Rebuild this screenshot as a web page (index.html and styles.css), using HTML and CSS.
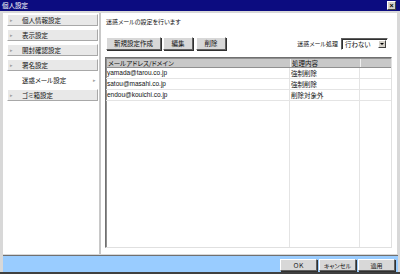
FILE: index.html
```html
<!DOCTYPE html>
<html lang="ja">
<head>
    <meta charset="UTF-8">
    <title>個人設定</title>
    <link rel="stylesheet" href="styles.css">
</head>
<body>
    <div class="window">
        <div class="titlebar">
            <span>個人設定</span>
            <span class="close">×</span>
        </div>

        <div class="main">
            <div class="sidebar">
                <div class="menu-item"><span class="mark">▸</span>個人情報設定</div>
                <div class="menu-item"><span class="mark">▸</span>表示設定</div>
                <div class="menu-item"><span class="mark">▸</span>開封確認設定</div>
                <div class="menu-item"><span class="mark">▸</span>署名設定</div>
                <div class="menu-item active"><span class="mark"></span>迷惑メール設定<span class="arrow">▸</span></div>
                <div class="menu-item"><span class="mark">▸</span>ゴミ箱設定</div>
            </div>

            <div class="content">
                <p class="lead">迷惑メールの設定を行います</p>

                <div class="toolbar">
                    <button class="btn wide">新規設定作成</button>
                    <button class="btn">編集</button>
                    <button class="btn">削除</button>
                    <div class="option">
                        <span>迷惑メール処理</span>
                        <div class="select">
                            <span>行わない</span>
                            <span class="drop"><i class="tri"></i></span>
                        </div>
                    </div>
                </div>

                <div class="list">
                    <div class="row head">
                        <span class="col-addr">メールアドレス/ドメイン</span>
                        <span class="col-act">処理内容</span>
                        <span class="col-end"></span>
                    </div>
                    <div class="row">
                        <span class="col-addr">yamada@tarou.co.jp</span>
                        <span class="col-act">強制削除</span>
                        <span class="col-end"></span>
                    </div>
                    <div class="row">
                        <span class="col-addr">satou@masahi.co.jp</span>
                        <span class="col-act">強制削除</span>
                        <span class="col-end"></span>
                    </div>
                    <div class="row">
                        <span class="col-addr">endou@kouichi.co.jp</span>
                        <span class="col-act">削除対象外</span>
                        <span class="col-end"></span>
                    </div>
                    <div class="row filler">
                        <span class="col-addr"></span>
                        <span class="col-act"></span>
                        <span class="col-end"></span>
                    </div>
                </div>
            </div>
        </div>

        <div class="footer">
            <button class="btn foot">ＯＫ</button>
            <button class="btn foot">キャンセル</button>
            <button class="btn foot">適用</button>
        </div>
    </div>
</body>
</html>
```

FILE: styles.css
```css
body {
    margin: 0;
    font-family: "Noto Sans CJK JP", "Liberation Sans", sans-serif;
    font-feature-settings: "palt";
    background-color: #d4d0c8;
    color: #111;
}

.window {
    width: 400px;
    height: 274px;
    display: flex;
    flex-direction: column;
    background-color: #d8d8d8;
    box-sizing: border-box;
    border-bottom: 2px solid #404040;
}

.titlebar {
    height: 11px;
    background-color: #0c0c80;
    color: #fff;
    font-size: 6.5px;
    line-height: 11px;
    padding: 0 4px 0 2px;
    display: flex;
    justify-content: space-between;
    align-items: center;
}

.close {
    width: 7px;
    height: 7px;
    background-color: #d4d0c8;
    color: #000;
    font-family: "Liberation Sans", sans-serif;
    font-weight: bold;
    font-size: 7px;
    line-height: 7px;
    text-align: center;
    border: 1px solid;
    border-color: #fff #404040 #404040 #fff;
}

.main {
    flex: 1;
    display: flex;
    padding: 2px 3px 0 3px;
    min-height: 0;
}

.sidebar {
    width: 96px;
    background-color: #fff;
    border-right: 2px solid #c8c8c8;
}

.menu-item {
    height: 10px;
    margin: 1px 1px 3px 4px;
    background-color: #e8e8e8;
    border: 1px solid;
    border-color: #fff #a8a8a8 #a8a8a8 #fff;
    font-size: 6.5px;
    line-height: 10px;
    display: flex;
    align-items: center;
}

.menu-item.active {
    background-color: #fff;
    border-color: #fff;
}

.mark {
    width: 12px;
    color: #a0a0a0;
    font-size: 5px;
    padding-left: 2px;
}

.arrow {
    margin-left: auto;
    color: #a0a0a0;
    font-size: 5px;
    padding-right: 1px;
}

.content {
    flex: 1;
    background-color: #fff;
    padding: 0 3px 0 4px;
    display: flex;
    flex-direction: column;
}

.lead {
    margin: 5px 0 0 1px;
    font-size: 6px;
    line-height: 8px;
}

.toolbar {
    display: flex;
    align-items: center;
    margin-top: 11px;
    padding-left: 1px;
}

.btn {
    height: 13px;
    padding: 0;
    background-color: #d8d8d8;
    border: 1px solid;
    border-color: #fff #606060 #606060 #fff;
    box-shadow: 1px 1px 0 #303030;
    font-family: "Noto Sans CJK JP", sans-serif;
    font-feature-settings: "palt";
    font-size: 6.5px;
    line-height: 11px;
    color: #111;
    margin-right: 3px;
    width: 30px;
}

.btn.wide {
    width: 55px;
    margin-right: 2px;
}

.option {
    margin-left: auto;
    display: flex;
    align-items: center;
    font-size: 6px;
    margin-right: 6px;
}

.select {
    margin-left: 3px;
    width: 42px;
    height: 10px;
    border: 1px solid;
    border-color: #606060 #fff #fff #606060;
    box-shadow: inset 1px 1px 0 #303030;
    display: flex;
    align-items: center;
    justify-content: space-between;
    padding-left: 3px;
    font-size: 6.5px;
    line-height: 10px;
}

.drop {
    width: 8px;
    height: 8px;
    margin-right: 1px;
    background-color: #d4d0c8;
    border: 1px solid;
    border-color: #fff #404040 #404040 #fff;
    box-sizing: border-box;
    display: flex;
    align-items: center;
    justify-content: center;
}

.tri {
    width: 0;
    height: 0;
    border-left: 2px solid transparent;
    border-right: 2px solid transparent;
    border-top: 2px solid #000;
}

.list {
    margin: 7px 2px 6px 0;
    flex: 1;
    border: 1px solid;
    border-color: #707070 #e0e0e0 #e0e0e0 #707070;
    box-shadow: inset 1px 1px 0 #909090;
    display: flex;
    flex-direction: column;
}

.row {
    display: flex;
    height: 11px;
    font-size: 6.5px;
    line-height: 10px;
    border-bottom: 1px solid #e4e4e4;
    box-sizing: border-box;
}

.row span {
    padding-left: 1px;
    border-right: 1px solid #e4e4e4;
    white-space: nowrap;
    overflow: hidden;
}

.row .col-addr {
    width: 182px;
    font-family: "Liberation Sans", "Noto Sans CJK JP", sans-serif;
}

.row.head .col-addr {
    font-family: "Noto Sans CJK JP", sans-serif;
}

.col-act {
    width: 68px;
}

.col-end {
    flex: 1;
    border-right: none !important;
}

.row.head {
    height: 9px;
    line-height: 8px;
    background-color: #c8c8c8;
    border-bottom: 1px solid #909090;
    margin-top: 1px;
    margin-left: 1px;
}

.row.head span {
    border-right: 1px solid #f0f0f0;
}

.row.filler {
    flex: 1;
    border-bottom: none;
}

.footer {
    height: 17px;
    margin: 1px 2px 0 3px;
    background-color: #99ccff;
    border-top: 1px solid #707070;
    display: flex;
    justify-content: flex-end;
    align-items: center;
    padding: 2px 3px 0 0;
    box-sizing: border-box;
}

.btn.foot {
    width: 37px;
    height: 12px;
    margin-right: 2px;
    font-size: 6px;
}

.btn.foot:last-child {
    margin-right: 0;
}
```
